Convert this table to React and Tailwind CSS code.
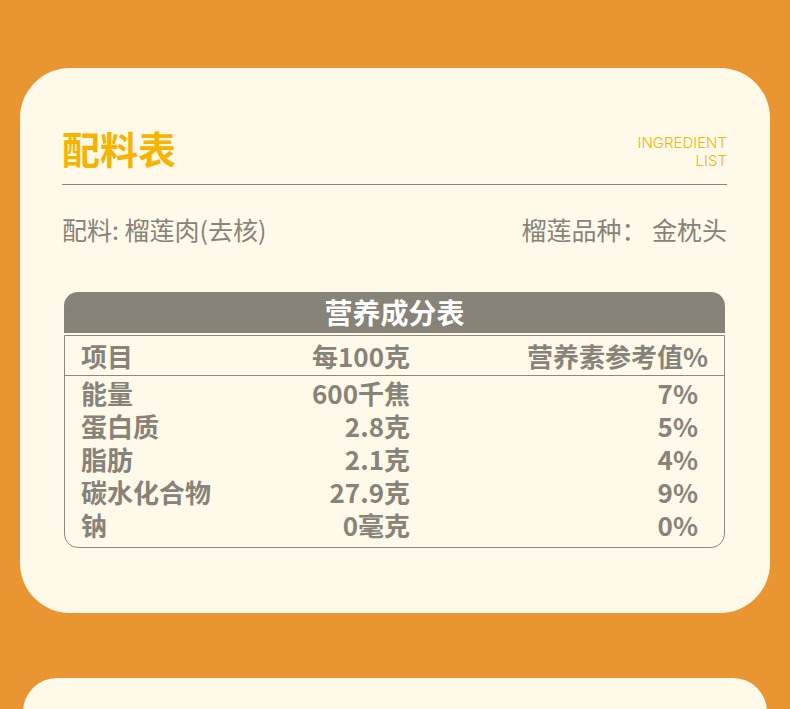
import React from 'react';

const rows = [
  { name: '能量', amount: '600千焦', nrv: '7%' },
  { name: '蛋白质', amount: '2.8克', nrv: '5%' },
  { name: '脂肪', amount: '2.1克', nrv: '4%' },
  { name: '碳水化合物', amount: '27.9克', nrv: '9%' },
  { name: '钠', amount: '0毫克', nrv: '0%' },
];

const cjk = { fontFamily: '"Noto Sans CJK SC", "Noto Sans", sans-serif' };

function NutritionTable() {
  return (
    <div className="mt-[50px] mx-[2px]">
      {/* dark title bar */}
      <div className="h-[41px] bg-[#878379] rounded-t-[14px] flex items-center justify-center">
        <span className="text-white text-[28px] font-bold leading-[41px]">营养成分表</span>
      </div>

      <div className="mt-[2px] border-[1.5px] border-[#8c887e] rounded-b-[14px] text-[#878379] font-bold text-[26px]">
        <div className="h-[40px] flex items-center border-b-[1.5px] border-[#8c887e] pl-[16px] pr-[16px] leading-[40px]">
          <div className="w-[200px]">项目</div>
          <div className="w-[129px] text-right">每100克</div>
          <div className="flex-1 text-right">营养素参考值%</div>
        </div>
        <div className="pl-[16px] pr-[26px] pb-[6px]">
          {rows.map((r) => (
            <div key={r.name} className="h-[33px] flex items-center leading-[33px]">
              <div className="w-[200px] whitespace-nowrap">{r.name}</div>
              <div className="w-[129px] text-right">{r.amount}</div>
              <div className="flex-1 text-right">{r.nrv}</div>
            </div>
          ))}
        </div>
      </div>
    </div>
  );
}

export default function App() {
  return (
    <div className="w-[790px] h-[709px] bg-[#e99632] overflow-hidden pt-[68px] px-[20px]" style={cjk}>
      {/* ingredient card */}
      <div className="h-[545px] bg-[#fef9e9] rounded-[50px] pt-[62px] pl-[42px] pr-[43px]">
        <div className="flex justify-between items-start">
          <h1 className="text-[38px] font-bold leading-[38px] text-[#f6b400] mt-[-1px]">配料表</h1>
          <div
            className="text-right text-[15px] leading-[18px] font-light text-[#f6b400] mt-[4px]"
            style={{ fontFamily: 'Inter, "Noto Sans", sans-serif' }}
          >
            <div>INGREDIENT</div>
            <div>LIST</div>
          </div>
        </div>
        <div className="mt-[14px] h-px bg-[#8a837a]" />

        <div className="mt-[32px] flex justify-between text-[25px] leading-[25px] text-[#878379]">
          <span>配料: 榴莲肉(去核)</span>
          <span>榴莲品种： 金枕头</span>
        </div>

        <NutritionTable />
      </div>

      {/* next card peeking in */}
      <div className="mt-[65px] mx-[3px] h-[200px] bg-[#fef9e9] rounded-t-[34px]" />
    </div>
  );
}
